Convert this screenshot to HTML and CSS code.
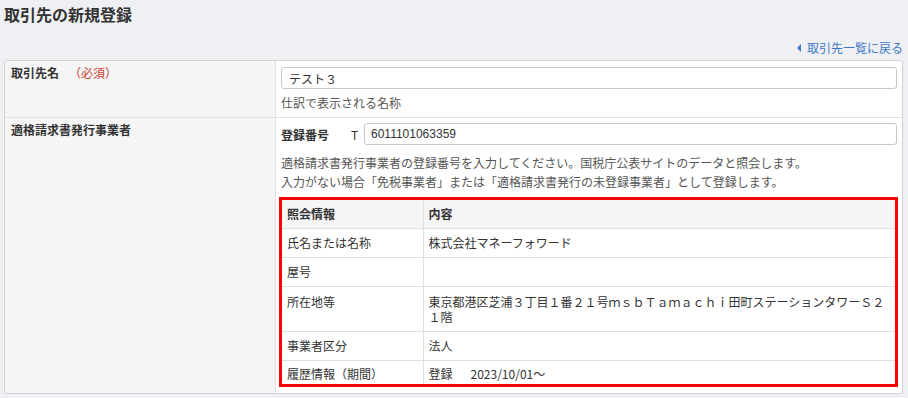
FILE: index.html
```html
<!DOCTYPE html>
<html lang="ja">
<head>
  <meta charset="UTF-8" />
  <title>取引先の新規登録</title>
  <link rel="stylesheet" href="styles.css">
</head>
<body>
  <h1 class="page-title">取引先の新規登録</h1>

  <div class="back-row">
    <a class="back-link" href="#"><span class="caret"></span>取引先一覧に戻る</a>
  </div>

  <div class="panel">
    <div class="row">
      <div class="label">取引先名<span class="required">（必須）</span></div>
      <div class="value">
        <input class="text-input" type="text" value="テスト３" />
        <p class="help">仕訳で表示される名称</p>
      </div>
    </div>

    <div class="row">
      <div class="label">適格請求書発行事業者</div>
      <div class="value value-reg">
        <div class="reg-line">
          <span class="reg-label">登録番号</span>
          <span class="reg-prefix">T</span>
          <input class="text-input reg-input" type="text" value="6011101063359" />
        </div>
        <p class="help lines">
          適格請求書発行事業者の登録番号を入力してください。国税庁公表サイトのデータと照会します。<br>
          入力がない場合「免税事業者」または「適格請求書発行の未登録事業者」として登録します。
        </p>

        <div class="lookup">
          <table>
            <tr>
              <th class="col-key">照会情報</th>
              <th>内容</th>
            </tr>
            <tr>
              <td>氏名または名称</td>
              <td>株式会社マネーフォワード</td>
            </tr>
            <tr>
              <td>屋号</td>
              <td></td>
            </tr>
            <tr class="multi">
              <td>所在地等</td>
              <td>東京都港区芝浦３丁目１番２１号ｍｓｂＴａｍａｃｈｉ田町ステーションタワーＳ２１階</td>
            </tr>
            <tr>
              <td>事業者区分</td>
              <td>法人</td>
            </tr>
            <tr class="last">
              <td>履歴情報（期間）</td>
              <td>登録<span class="date">2023/10/01～</span></td>
            </tr>
          </table>
        </div>
      </div>
    </div>
  </div>
</body>
</html>
```

FILE: styles.css
```css
:root {
  --bg: #eff0f4;
  --text: #333333;
  --border: #d4d4d4;
  --label-bg: #f5f5f5;
  --link: #3f78c3;
  --red: #ff0000;
}

* {
  margin: 0;
  padding: 0;
  box-sizing: border-box;
  font-family: "Noto Sans CJK JP", "Liberation Sans", sans-serif;
}

body {
  background: var(--bg);
  color: var(--text);
  font-size: 12px;
  padding: 4px 5px 0 4px;
}

.page-title {
  font-size: 16px;
  font-weight: bold;
  line-height: 20px;
  color: #333;
}

.back-row {
  display: flex;
  justify-content: flex-end;
  margin-top: 12px;
  height: 24px;
}

.back-link {
  color: var(--link);
  text-decoration: none;
  line-height: 18px;
  display: flex;
  align-items: center;
}

.caret {
  width: 0;
  height: 0;
  border-top: 4px solid transparent;
  border-bottom: 4px solid transparent;
  border-right: 4px solid var(--link);
  margin-right: 6px;
}

.panel {
  background: #fff;
  border: 1px solid var(--border);
  border-radius: 3px;
  box-shadow: 0 1px 1px rgba(0, 0, 0, 0.1);
  overflow: hidden;
}

.row {
  display: flex;
}

.row + .row {
  border-top: 1px solid #e2e2e2;
}

.label {
  width: 271px;
  flex-shrink: 0;
  background: var(--label-bg);
  border-right: 1px solid #e2e2e2;
  padding: 4px 6px;
  font-weight: bold;
  line-height: 16px;
}

.required {
  color: #c9442f;
  font-weight: normal;
  margin-left: 10px;
}

.value {
  flex: 1;
  padding: 6px 5px 6px 5px;
}

.value-reg {
  padding-top: 5px;
}

.text-input {
  display: block;
  width: 100%;
  height: 22px;
  border: 1px solid #c8c8c8;
  border-radius: 3px;
  padding: 0 7px;
  font-size: 12px;
  color: #333;
  background: #fff;
  outline: none;
}

.help {
  margin-top: 6px;
  color: #555;
  line-height: 16px;
}

.help.lines {
  margin-top: 8px;
  line-height: 19px;
}

.reg-line {
  display: flex;
  align-items: center;
}

.reg-label {
  font-weight: bold;
  width: 70px;
}

.reg-prefix {
  width: 13px;
}

.reg-input {
  flex: 1;
  width: auto;
  padding: 0 6px;
  font-family: "Liberation Sans", sans-serif;
}

.lookup {
  margin-top: 6px;
  border: 3px solid var(--red);
  margin-right: -1px;
  margin-left: -2px;
}

table {
  width: 100%;
  border-collapse: collapse;
}

th, td {
  border: 1px solid #e0e0e0;
  text-align: left;
  vertical-align: top;
  padding: 6px 5px;
  line-height: 16px;
}

tr:first-child th {
  border-top: none;
}

tr:last-child td {
  border-bottom: none;
}

th:first-child, td:first-child {
  border-left: none;
}

th:last-child, td:last-child {
  border-right: none;
}

th {
  background: var(--label-bg);
  font-weight: bold;
}

.multi td {
  padding-top: 7px;
  padding-bottom: 7px;
  line-height: 15px;
}

.last td {
  padding-top: 5px;
  padding-bottom: 2px;
}

.col-key {
  width: 141px;
}

.date {
  margin-left: 18px;
}
```
